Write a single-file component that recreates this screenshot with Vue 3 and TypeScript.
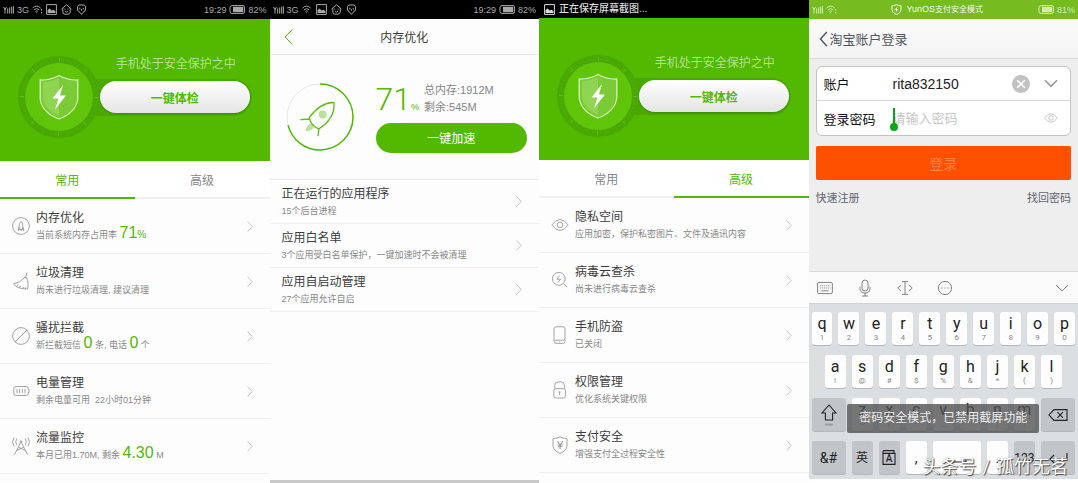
<script setup lang="ts">
import { ref } from 'vue'

interface Part {
  text: string
  big?: boolean
  green?: boolean
}
interface Item {
  title: string
  parts: Part[]
  icon: string[]
  mark?: string
}
interface Key {
  main: string
  sub: string
}

const circle = (x: number, y: number, r: number): string =>
  `M${x - r} ${y}a${r} ${r} 0 1 0 ${2 * r} 0a${r} ${r} 0 1 0 ${-2 * r} 0Z`

const commonItems: Item[] = [
  {
    title: '内存优化',
    parts: [{ text: '当前系统内存占用率 ' }, { text: '71', big: true }, { text: '%', green: true }],
    icon: [circle(9, 9, 8.4), 'M9 4.4C7.2 6 6.9 8.5 7.3 12.4H10.7C11.1 8.5 10.8 6 9 4.4ZM7.1 10L6 13.6L7.4 12.4M10.9 10L12 13.6L10.6 12.4M9 12.4V14.2'],
  },
  {
    title: '垃圾清理',
    parts: [{ text: '尚未进行垃圾清理, 建议清理' }],
    icon: ['M15 .5L13.6 5.2M12.2 5L15.2 6M12.6 5.3C9.5 9 6.5 10.8 1.8 11.6C3 15 8 17 15.6 17C16.4 13 16 9 14.6 6M4.4 14.6L6 12.4M7.6 16L8.6 13.8M11 16.8L11.4 14.8M13.4 17L13.3 15.4'],
  },
  {
    title: '骚扰拦截',
    parts: [
      { text: '新拦截短信 ' },
      { text: '0', big: true },
      { text: ' 条, 电话 ' },
      { text: '0', big: true },
      { text: ' 个' },
    ],
    icon: [circle(9, 9, 8.4), 'M3.2 14.8L14.8 3.2'],
  },
  {
    title: '电量管理',
    parts: [{ text: '剩余电量可用  22小时01分钟' }],
    icon: ['M4 4.5H14Q16.2 4.5 16.2 6.5V7.4H17V10.6H16.2V11.5Q16.2 13.5 14 13.5H4Q1.8 13.5 1.8 11.5V6.5Q1.8 4.5 4 4.5ZM5 6.8V11.2M7.6 6.8V11.2M10.3 6.8V11.2M13 6.8V11.2'],
  },
  {
    title: '流量监控',
    parts: [
      { text: '本月已用1.70M, 剩余 ' },
      { text: '4.30', big: true },
      { text: ' M' },
    ],
    icon: ['M2.4 17.6L9 5L15.6 17.6M4.6 13.6L11.6 10.2M13.4 13.6L6.4 10.2', circle(9, 4.6, 0.9), 'M4.8 1.4Q2.6 4.8 4.8 8.2M2 .6Q-1 4.8 2 9.4M13.2 1.4Q15.4 4.8 13.2 8.2M16 .6Q19 4.8 16 9.4'],
  },
]

const advancedItems: Item[] = [
  {
    title: '隐私空间',
    parts: [{ text: '应用加密，保护私密图片、文件及通讯内容' }],
    icon: ['M.8 9Q9 -2 17.2 9Q9 20 .8 9Z', circle(9, 9, 2.8)],
  },
  {
    title: '病毒云查杀',
    parts: [{ text: '尚未进行病毒云查杀' }],
    icon: [circle(7.8, 7.8, 6.4), 'M12.6 12.4L16.2 16.2M8.6 4.6L6 8.2H9.6L7 11.4'],
  },
  {
    title: '手机防盗',
    parts: [{ text: '已关闭' }],
    icon: ['M5 .8H12Q14 .8 14 2.8V15.4Q14 17.4 12 17.4H5Q3 17.4 3 15.4V2.8Q3 .8 5 .8Z', 'M3.6 14.2H13.4M7.8 15.8H9.2'],
  },
  {
    title: '权限管理',
    parts: [{ text: '优化系统关键权限' }],
    icon: ['M4.8 7.6H12.4Q14.4 7.6 14.4 9.6V15Q14.4 17 12.4 17H4.8Q2.8 17 2.8 15V9.6Q2.8 7.6 4.8 7.6ZM3.8 7.4V4.4Q3.8 .8 7.4 .8H9.8Q13.4 .8 13.4 4.4V7.4M8.6 10.6V14M7.7 11H9.5'],
  },
  {
    title: '支付安全',
    parts: [{ text: '增强支付全过程安全性' }],
    icon: ['M9 .8Q12 2.8 16 2.4V10Q15.4 14.8 9 17.4Q2.6 14.8 2 10V2.4Q6 2.8 9 .8Z'],
    mark: '¥',
  },
]

const memoryItems = [
  { title: '正在运行的应用程序', sub: '15个后台进程' },
  { title: '应用白名单', sub: '3个应用受白名单保护，一键加速时不会被清理' },
  { title: '应用自启动管理', sub: '27个应用允许自启' },
]

const guardScreens = [
  { id: 'common', items: commonItems, tab: 0 },
  { id: 'advanced', items: advancedItems, tab: 1 },
]
const tabs = ['常用', '高级']

const toKeys = (letters: string, subs: string): Key[] =>
  [...letters].map((main, i) => ({ main, sub: subs[i] }))
const rowOne = toKeys('qwertyuiop', '1234567890')
const rowTwo = toKeys('asdfghjkl', '!@#$%&*()')
const rowThree = toKeys('zxcvbnm', '~/-_:;?')

const account = ref('rita832150')
const password = ref('')
</script>

<template>
  <main class="board">
    <section
      v-for="(screen, s) in guardScreens"
      :key="screen.id"
      class="screen"
      :class="'screen-' + screen.id"
    >
      <header v-if="s === 0" class="status">
        <svg class="ico-signal" viewBox="0 0 11 8"><path d="M.5 1L2 3.4L3.5 1M2 3V7.6M4.7 2.4V7.6M6.7 1.4V7.6M8.7 .6V7.6M10.4 .2V7.6" /></svg>
        <span>3G</span>
        <svg class="ico-wifi" viewBox="0 0 11 9"><path d="M.6 3Q4.6 -.8 8.6 3M2 4.8Q4.6 2.4 7.2 4.8M3.4 6.4Q4.6 5.4 5.8 6.4M4.6 7.4V8.2M9.6 4V5.6M9.6 6.8V8.4" /></svg>
        <svg class="ico-pic" viewBox="0 0 11 11"><path d="M.6 .6H10.4V10.4H.6Z" /><path class="fill" d="M1.6 9V6L3.6 4.6L5.6 6.6L7.6 5.8L9.4 7.2V9Z" /></svg>
        <svg class="ico-pic" viewBox="0 0 11 11"><path d="M.6 5L5.5 .8L10.4 5M1.8 4.2V8Q1.8 10.2 4 10.2H7Q9.2 10.2 9.2 8V4.2M3.8 4.6V5.6M7 4.6V5.6M4 7.4Q5.5 8.8 7 7.4" /></svg>
        <svg class="ico-pic" viewBox="0 0 11 11"><path d="M2.8 1H8.2Q10 1.6 9.6 5Q9.4 7.4 7 8.4L5.5 10.4L4 8.4Q1.6 7.4 1.4 5Q1 1.6 2.8 1ZM3.8 3.8V5.4M7.2 3.8V5.4M5.5 5V6.6" /></svg>
        <span class="status-time">19:29</span>
        <svg class="ico-battery" viewBox="0 0 16 9"><path d="M3 .6H14Q15.4 .6 15.4 2V7Q15.4 8.4 14 8.4H3Q1 8.4 1 6.6V2.4Q1 .6 3 .6Z" /><path class="fill" d="M4 1.8H14.2V7.2H4Z" /></svg>
        <span>82%</span>
      </header>
      <header v-else class="status status-notice">
        <svg class="ico-pic" viewBox="0 0 11 11"><path d="M.6 .6H10.4V10.4H.6Z" /><path class="fill" d="M1.6 9V6L3.6 4.6L5.6 6.6L7.6 5.8L9.4 7.2V9Z" /></svg>
        <span>正在保存屏幕截图...</span>
      </header>

      <div class="hero">
        <svg class="dial" viewBox="0 0 82 82">
          <circle class="dial-ring" cx="41" cy="41" r="41" />
          <circle class="dial-ticks" cx="41" cy="41" r="37" pathLength="240" />
          <circle class="dial-marks" cx="41" cy="41" r="37" pathLength="240" />
          <circle class="dial-face" cx="41" cy="41" r="34" />
          <path class="shield-fill" d="M41 20.5Q50 25 59 24.5V43Q57 56 41 62Q25 56 23 43V24.5Q32 25 41 20.5Z" />
          <path class="shield-half" d="M41 22V60Q27 54 25 43V26.5Q33 26 41 22Z" />
          <path class="shield-line" d="M41 19.5Q50 24.5 59.8 24V43Q58 56.5 41 63Q24 56.5 22.2 43V24Q32 24.5 41 19.5Z" />
          <path class="bolt" d="M45 29L34.5 42.5H40.5L37 53.5L48 39.5H42Z" />
        </svg>
        <div class="hero-side">
          <p>手机处于安全保护之中</p>
          <div class="groove"><button type="button" class="check">一键体检</button></div>
        </div>
      </div>

      <nav class="tabs">
        <button v-for="(tab, t) in tabs" :key="tab" type="button" :class="{ active: t === screen.tab }">{{ tab }}</button>
      </nav>

      <ul class="items">
        <li v-for="item in screen.items" :key="item.title">
          <button type="button" class="item">
            <svg class="item-icon" viewBox="0 0 18 18">
              <path v-for="d in item.icon" :key="d" :d="d" />
              <text v-if="item.mark" x="9" y="13" text-anchor="middle">{{ item.mark }}</text>
            </svg>
            <span class="item-text">
              <span class="item-title">{{ item.title }}</span>
              <span class="item-sub"><span v-for="(part, p) in item.parts" :key="p" :class="{ big: part.big, green: part.green }">{{ part.text }}</span></span>
            </span>
            <svg class="arrow" viewBox="0 0 6 11"><path d="M.6 .6L5.2 5.5L.6 10.4" /></svg>
          </button>
        </li>
      </ul>
    </section>

    <section class="screen screen-memory">
      <header class="status">
        <svg class="ico-signal" viewBox="0 0 11 8"><path d="M.5 1L2 3.4L3.5 1M2 3V7.6M4.7 2.4V7.6M6.7 1.4V7.6M8.7 .6V7.6M10.4 .2V7.6" /></svg>
        <span>3G</span>
        <svg class="ico-wifi" viewBox="0 0 11 9"><path d="M.6 3Q4.6 -.8 8.6 3M2 4.8Q4.6 2.4 7.2 4.8M3.4 6.4Q4.6 5.4 5.8 6.4M4.6 7.4V8.2" /></svg>
        <svg class="ico-pic" viewBox="0 0 11 11"><path d="M.6 .6H10.4V10.4H.6Z" /><path class="fill" d="M1.6 9V6L3.6 4.6L5.6 6.6L7.6 5.8L9.4 7.2V9Z" /></svg>
        <svg class="ico-pic" viewBox="0 0 11 11"><path d="M.6 5L5.5 .8L10.4 5M1.8 4.2V8Q1.8 10.2 4 10.2H7Q9.2 10.2 9.2 8V4.2M3.8 4.6V5.6M7 4.6V5.6M4 7.4Q5.5 8.8 7 7.4" /></svg>
        <svg class="ico-pic" viewBox="0 0 11 11"><path d="M2.8 1H8.2Q10 1.6 9.6 5Q9.4 7.4 7 8.4L5.5 10.4L4 8.4Q1.6 7.4 1.4 5Q1 1.6 2.8 1ZM3.8 3.8V5.4M7.2 3.8V5.4M5.5 5V6.6" /></svg>
        <span class="status-time">19:29</span>
        <svg class="ico-battery" viewBox="0 0 16 9"><path d="M3 .6H14Q15.4 .6 15.4 2V7Q15.4 8.4 14 8.4H3Q1 8.4 1 6.6V2.4Q1 .6 3 .6Z" /><path class="fill" d="M4 1.8H14.2V7.2H4Z" /></svg>
        <span>82%</span>
      </header>
      <div class="titlebar">
        <button type="button" aria-label="返回"><svg viewBox="0 0 9 16"><path d="M8.4 .6L1 8L8.4 15.4" /></svg></button>
        <h1>内存优化</h1>
      </div>
      <div class="memory">
        <svg class="gauge" viewBox="0 0 68 68">
          <circle class="gauge-track" cx="34" cy="34" r="33" />
          <circle class="gauge-value" cx="34" cy="34" r="33" pathLength="100" transform="rotate(-90 34 34)" />
          <circle class="soft" cx="36.7" cy="31.5" r="4" />
          <path class="soft" d="M25.6 40.6L28 44.4Q25 48 19.6 48Q20 42 25.6 40.6Z" />
          <path class="rocket" d="M48 19.5C38 19 29 27 23.2 34.6C24.4 40 28 44 33 45.8C42 40 49 31 48 19.5ZM24 36L14.3 36.6M33 45.4L32 53.2" />
        </svg>
        <div class="memory-side">
          <div class="figures">
            <p class="percent"><strong>71</strong><span>%</span></p>
            <p class="totals">总内存:1912M<br />剩余:545M</p>
          </div>
          <button type="button" class="boost">一键加速</button>
        </div>
      </div>
      <ul class="items compact">
        <li v-for="item in memoryItems" :key="item.title">
          <button type="button" class="item">
            <span class="item-text">
              <span class="item-title">{{ item.title }}</span>
              <span class="item-sub">{{ item.sub }}</span>
            </span>
            <svg class="arrow" viewBox="0 0 6 11"><path d="M.6 .6L5.2 5.5L.6 10.4" /></svg>
          </button>
        </li>
      </ul>
    </section>

    <section class="screen screen-login">
      <header class="status status-green">
        <svg class="ico-signal" viewBox="0 0 11 8"><path d="M.5 1L2 3.4L3.5 1M2 3V7.6M4.7 2.4V7.6M6.7 1.4V7.6M8.7 .6V7.6M10.4 .2V7.6" /></svg>
        <svg class="ico-wifi" viewBox="0 0 11 9"><path d="M.6 3Q4.6 -.8 8.6 3M2 4.8Q4.6 2.4 7.2 4.8M3.4 6.4Q4.6 5.4 5.8 6.4M4.6 7.4V8.2M9.6 4V5.6M9.6 6.8V8.4" /></svg>
        <span class="secure">
          <svg class="ico-pic" viewBox="0 0 11 11"><path d="M5.5 .6Q7.4 1.8 10 1.6V6Q9.6 9 5.5 10.6Q1.4 9 1 6V1.6Q3.6 1.8 5.5 .6Z" /><path class="fill" d="M6.4 2.6L3.4 6H5.2L4.6 8.6L7.6 5H5.8Z" /></svg>
          <span><span class="latin">YunOS</span>支付安全模式</span>
        </span>
        <svg class="ico-battery" viewBox="0 0 16 9"><path d="M3 .6H14Q15.4 .6 15.4 2V7Q15.4 8.4 14 8.4H3Q1 8.4 1 6.6V2.4Q1 .6 3 .6Z" /><path class="fill" d="M4 1.8H14.2V7.2H4Z" /></svg>
        <span>81%</span>
      </header>
      <div class="login-head">
        <button type="button" aria-label="返回"><svg viewBox="0 0 9 16"><path d="M7.8 1L1.4 8L7.8 15" /></svg></button>
        <h1>淘宝账户登录</h1>
      </div>

      <form class="login" @submit.prevent>
        <div class="card">
          <div class="field">
            <label for="account">账户</label>
            <input id="account" v-model="account" type="text" />
            <button type="button" aria-label="清除" class="clear"><svg viewBox="0 0 18 18"><circle cx="9" cy="9" r="9" /><path d="M5.2 5.2L12.8 12.8M12.8 5.2L5.2 12.8" /></svg></button>
            <button type="button" aria-label="更多账户" class="more"><svg viewBox="0 0 14 9"><path d="M1 1.2L7 7.4L13 1.2" /></svg></button>
          </div>
          <div class="field">
            <label for="password">登录密码</label>
            <span class="pass"><input id="password" v-model="password" type="password" placeholder="请输入密码" /><i class="caret"></i></span>
            <button type="button" aria-label="显示密码" class="eye"><svg viewBox="0 0 14 10"><path d="M.6 5Q7 -3.4 13.4 5Q7 13.4 .6 5Z" /><circle cx="7" cy="5" r="2.2" /></svg></button>
          </div>
        </div>
        <button type="submit" class="submit">登录</button>
        <div class="links"><a href="#register">快速注册</a><a href="#recover">找回密码</a></div>
      </form>

      <div class="tools">
        <button type="button" aria-label="键盘"><svg viewBox="0 0 18 18"><path d="M3 3.4H15Q16.4 3.4 16.4 4.8V13.2Q16.4 14.6 15 14.6H3Q1.6 14.6 1.6 13.2V4.8Q1.6 3.4 3 3.4Z" /><path class="dots" d="M3.8 6.8H14.4M3.8 9H14.4" /><path d="M5.4 11.8H12.6" /></svg></button>
        <button type="button" aria-label="语音"><svg viewBox="0 0 18 18"><path d="M9 1Q12 1 12 4V9Q12 12 9 12Q6 12 6 9V4Q6 1 9 1ZM4 7.6V9.4Q4 14 9 14Q14 14 14 9.4V7.6M9 14V17M6 17H12" /></svg></button>
        <button type="button" aria-label="光标"><svg viewBox="0 0 18 18"><path d="M9 2.6V15.4M6 2.6H12M6 15.4H12M5 5.8L1.8 9L5 12.2M13 5.8L16.2 9L13 12.2" /></svg></button>
        <button type="button" aria-label="更多"><svg viewBox="0 0 18 18"><circle cx="9" cy="9" r="6.6" /><path d="M5.4 9H6.6M8.4 9H9.6M11.4 9H12.6" /></svg></button>
        <button type="button" aria-label="收起" class="fold"><svg viewBox="0 0 18 18"><path d="M3 6L9 12L15 6" /></svg></button>
      </div>

      <div class="keyboard">
        <div class="keys">
          <button v-for="key in rowOne" :key="key.main" type="button" class="key">{{ key.main }}<small>{{ key.sub }}</small></button>
        </div>
        <div class="keys keys-inset">
          <button v-for="key in rowTwo" :key="key.main" type="button" class="key">{{ key.main }}<small>{{ key.sub }}</small></button>
        </div>
        <div class="keys keys-grid">
          <button type="button" aria-label="大写" class="key dark"><svg viewBox="0 0 16 22"><path d="M8 1L15 9H11.6V16H4.4V9H1Z" /><path class="bar" d="M4 20.6H12" /></svg></button>
          <button v-for="key in rowThree" :key="key.main" type="button" class="key">{{ key.main }}<small>{{ key.sub }}</small></button>
          <button type="button" aria-label="删除" class="key dark"><svg class="wide" viewBox="0 0 20 12"><path d="M6 .6H19V11.4H6L1 6ZM9.4 3.2L15 8.8M15 3.2L9.4 8.8" /></svg></button>
        </div>
        <div class="keys keys-grid">
          <button type="button" class="key dark word">&amp;#</button>
          <button type="button" class="key dark word small-word">英</button>
          <button type="button" class="key dark word" aria-label="词典"><svg class="book" viewBox="0 0 14 15"><path d="M1 3.4H13V14.4H1ZM1 3.4V1.6Q1 .6 2 .6H12V3.4" /><text x="7" y="12.4" text-anchor="middle">A</text></svg></button>
          <button type="button" class="key word">,</button>
          <button type="button" class="key space" aria-label="空格"><svg class="wide" viewBox="0 0 20 12"><path d="M1 6V10H19V6" /></svg></button>
          <button type="button" class="key word">.</button>
          <button type="button" class="key dark word small-word">123</button>
          <button type="button" aria-label="换行" class="key dark"><svg class="wide" viewBox="0 0 20 12"><path d="M19 1V7H2M6 3L2 7L6 11" /></svg></button>
        </div>
        <div class="toast" role="status">密码安全模式，已禁用截屏功能</div>
        <div class="watermark">头条号<span>/</span>孤竹无茗</div>
      </div>
    </section>
  </main>
</template>

<style>
body {
  margin: 0;
  background: #fff;
}
</style>

<style scoped>
.board {
  display: grid;
  grid-template-columns: repeat(4, minmax(0, 1fr));
  min-height: 100vh;
  overflow: hidden;
  background: #fff;
  font-family: 'Liberation Sans', 'Noto Sans CJK SC', sans-serif;
  font-size: 12px;
  color: #3c3c3c;
}
.screen {
  display: flex;
  flex-direction: column;
  min-width: 0;
  background: #fdfdfd;
}
.screen-common { order: 1; }
.screen-memory { order: 2; margin-bottom: 3px; box-shadow: 0 3px 0 #c8c8c8; }
.screen-advanced { order: 3; }
.screen-login { order: 4; }
svg {
  display: block;
  flex: none;
  fill: none;
  stroke: currentColor;
}
button {
  margin: 0;
  padding: 0;
  border: 0;
  background: none;
  color: inherit;
  font: inherit;
  cursor: pointer;
}
h1, p, ul {
  margin: 0;
  padding: 0;
  font-weight: 400;
  font-size: 12px;
}
ul { list-style: none; }

/* status bar */
.status {
  display: flex;
  align-items: center;
  gap: 3px;
  height: 19px;
  padding: 0 3px;
  background: #000;
  color: #a9a9a9;
  font-size: 9px;
  line-height: 12px;
}
.status .fill { fill: currentColor; stroke: none; }
.ico-signal { width: 11px; height: 8px; }
.ico-wifi { width: 11px; height: 9px; }
.ico-pic { width: 11px; height: 11px; margin-right: 1px; }
.ico-battery { width: 16px; height: 9px; }
.status-time { margin-left: auto; }
.status-notice {
  height: 18px;
  padding: 0 5px;
  color: #dcdcdc;
  font-size: 10px;
  font-weight: 500;
}
.status-green { background: #76bc21; color: #d3eab4; }
.secure {
  display: flex;
  align-items: center;
  gap: 3px;
  margin: 0 auto;
  color: #f4fbe9;
  font-size: 8px;
}
.latin { font-size: 9px; }

/* protection banner */
.hero {
  display: flex;
  align-items: flex-start;
  padding: 37px 18px 23px;
  background: #52b900;
}
.dial { position: relative; width: 82px; height: 82px; stroke: none; }
.dial-ring { fill: #49a801; }
.dial-ticks, .dial-marks { stroke: #51ae0c; }
.dial-ticks { stroke-width: 3; stroke-dasharray: 1 3; }
.dial-marks { stroke-width: 4; stroke-dasharray: 1 29; stroke: #62b926; }
.dial-face { fill: #60c409; }
.shield-fill { fill: #7acb35; }
.shield-half { fill: #8fd552; }
.shield-line { stroke: #d8f2bf; stroke-width: 1.3; }
.bolt { fill: #fff; }
.hero-side { flex: 1; min-width: 0; }
.hero-side p {
  line-height: 16px;
  text-align: center;
  color: #b3e08a;
}
.groove {
  margin: 7px 0 0 -12px;
  padding: 2px 2px 3px 12px;
  border-radius: 0 19px 19px 0;
  background: #49a901;
}
.check {
  display: block;
  width: 100%;
  height: 32px;
  border-radius: 16px;
  background: linear-gradient(#fff, #e4e4e4);
  box-shadow: 0 1px 2px #3b8a00;
  color: #52b900;
  font-weight: 700;
}

/* tabs */
.tabs { display: flex; height: 38px; background: #fff; }
.tabs button {
  flex: 1;
  border-bottom: 2px solid #f0f0f0;
  color: #858585;
}
.tabs .active { border-color: #52b900; color: #52b900; }

/* lists */
.item {
  display: flex;
  align-items: center;
  width: 100%;
  height: 54px;
  padding: 0 17px 0 12px;
  text-align: left;
}
.items li { border-bottom: 1px solid #efefef; }
.item-icon { width: 18px; height: 18px; margin-right: 6px; color: #8e8e8e; stroke-width: .8; }
.item-icon text { fill: currentColor; stroke: none; font-size: 11px; }
.item-text { display: block; flex: 1; min-width: 0; padding-top: 2px; }
.item-title, .item-sub { display: block; white-space: pre; }
.item-title { line-height: 16px; }
.item-sub { height: 18px; line-height: 18px; font-size: 9px; color: #888; }
.big, .green { color: #52b900; line-height: 0; }
.big { font-size: 16px; }
.green { font-size: 10px; }
.arrow { width: 6px; height: 11px; color: #c4c4c4; stroke-width: 1; }
.compact .item { height: 43px; }
.compact .item-text { padding-top: 3px; }

/* memory screen */
.titlebar {
  display: grid;
  grid-template-columns: 36px 1fr 36px;
  align-items: center;
  height: 35px;
  border-bottom: 1px solid #e6e6e6;
  text-align: center;
}
.titlebar svg { width: 9px; height: 16px; margin-left: 14px; color: #52b900; }
.memory {
  display: flex;
  align-items: center;
  gap: 22px;
  height: 124px;
  padding: 0 12px 0 16px;
  border-bottom: 1px solid #e9e9e9;
}
.gauge { width: 68px; height: 68px; }
.gauge-track { stroke: #e8e8e8; }
.gauge-value { stroke: #52b900; stroke-width: 1.5; stroke-dasharray: 71 29; }
.soft { fill: #b9e29a; stroke: none; }
.rocket { stroke: #5cbb14; stroke-width: 1.3; stroke-linejoin: round; }
.memory-side { flex: 1; min-width: 0; }
.figures { display: flex; gap: 5px; height: 34px; white-space: nowrap; }
.percent { display: flex; align-items: baseline; color: #52b900; line-height: 34px; }
.percent strong { font-family: Roboto, 'Liberation Sans', sans-serif; font-size: 32px; font-weight: 300; }
.percent span { font-size: 9px; line-height: 12px; }
.totals { font-size: 11px; line-height: 17px; color: #868686; }
.boost {
  display: block;
  width: 100%;
  height: 30px;
  margin-top: 7px;
  border-radius: 15px;
  background: #52b900;
  color: #fff;
}

/* login screen */
.screen-login { background: #fff; }
.login-head {
  display: flex;
  align-items: center;
  gap: 2px;
  height: 39px;
  padding: 0 10px;
  border-bottom: 1px solid #dadada;
  background: linear-gradient(#fafafa, #f4f4f4);
  color: #50555e;
}
.login-head svg { width: 9px; height: 16px; stroke-width: 1.4; }
.login-head h1 { font-size: 13px; }
.login { padding: 7px 7px 65px; background: #eee; }
.card {
  border: 1px solid #c3c3c3;
  border-radius: 6px;
  background: #fff;
}
.field {
  display: flex;
  align-items: center;
  height: 33px;
  padding: 0 12px 0 7px;
  color: #111;
  font-size: 13px;
}
.field + .field { height: 34px; border-top: 1px solid #d8d8d8; }
.field label { flex: none; width: 69px; }
.field input {
  flex: 1;
  width: 100%;
  min-width: 0;
  padding: 0;
  border: 0;
  outline: 0;
  background: none;
  color: #222;
  font: inherit;
}
.field #account { font-size: 14px; }
.field input::placeholder { color: #c6c6c6; opacity: 1; }
.pass { position: relative; display: flex; flex: 1; min-width: 0; }
.caret {
  position: absolute;
  left: 0;
  top: -3px;
  width: 2px;
  height: 18px;
  background: #00a816;
}
.caret::after {
  content: '';
  position: absolute;
  left: -3px;
  bottom: -5px;
  width: 8px;
  height: 8px;
  border-radius: 50%;
  background: #00a816;
}
.clear svg { width: 18px; height: 18px; stroke: #fff; stroke-width: 1.6; }
.clear circle { fill: #c2c2c2; stroke: none; }
.more { margin-left: 14px; }
.more svg { width: 14px; height: 9px; color: #969696; stroke-width: 1.6; }
.eye svg { width: 14px; height: 10px; color: #c4c4c4; }
.submit {
  display: block;
  width: 100%;
  height: 34px;
  margin-top: 10px;
  border-radius: 2px;
  background: #ff5000;
  color: #ff8348;
  font-size: 14px;
}
.links {
  display: flex;
  justify-content: space-between;
  margin-top: 10px;
  font-size: 11px;
  line-height: 16px;
}
.links a { color: #5f646e; text-decoration: none; }
.tools {
  display: flex;
  align-items: center;
  gap: 22px;
  height: 31px;
  padding: 0 7px;
  border-top: 1px solid #dadada;
  border-bottom: 1px solid #cfd3d6;
  background: #fafafa;
  color: #777;
}
.tools svg { width: 18px; height: 18px; stroke-width: .9; }
.dots { stroke-dasharray: 1 1; }
.fold { margin-left: auto; }

/* keyboard */
.keyboard {
  position: relative;
  display: flex;
  flex-direction: column;
  gap: 10px;
  padding: 8px 3px 5px;
  background: #dbdfe2;
  font-family: Roboto, 'Noto Sans CJK SC', sans-serif;
}
.keys { display: flex; gap: 6px; }
.keys-inset { padding: 0 13px; }
.keys-grid { display: grid; grid-template-columns: 34fr repeat(7, 21fr) 34fr; }
.key {
  display: flex;
  flex: 1;
  flex-direction: column;
  align-items: center;
  justify-content: center;
  min-width: 0;
  height: 33px;
  border-radius: 3px;
  background: #fdfdfd;
  box-shadow: 0 1px 0 #b4b8bc;
  color: #222;
  font-size: 16px;
  line-height: 18px;
}
.key small { color: #8a8a8a; font-size: 8px; line-height: 10px; }
.dark { background: #c1c4c9; }
.key svg { width: 16px; height: 22px; stroke-width: 1.1; }
.key .wide { width: 20px; height: 12px; }
.key .book { width: 14px; height: 15px; }
.book text { fill: currentColor; stroke: none; font-size: 10px; font-weight: 500; }
.bar { stroke: #9b9ea3; stroke-width: 2; }
.word { font-size: 14px; }
.small-word { font-size: 12px; }
.space { grid-column: span 2; }
.toast {
  position: absolute;
  top: 100px;
  left: 50%;
  padding: 5px 12px;
  transform: translateX(-50%);
  border-radius: 2px;
  background: rgba(82, 82, 84, .8);
  color: #ededed;
  line-height: 19px;
  white-space: nowrap;
}
.watermark {
  position: absolute;
  right: 10px;
  bottom: 0;
  color: #fff;
  font-size: 18px;
  line-height: 24px;
  text-shadow: 1px 1px 1px #444, 0 0 1px #777;
  white-space: nowrap;
}
.watermark span { margin: 0 6px; }
</style>
